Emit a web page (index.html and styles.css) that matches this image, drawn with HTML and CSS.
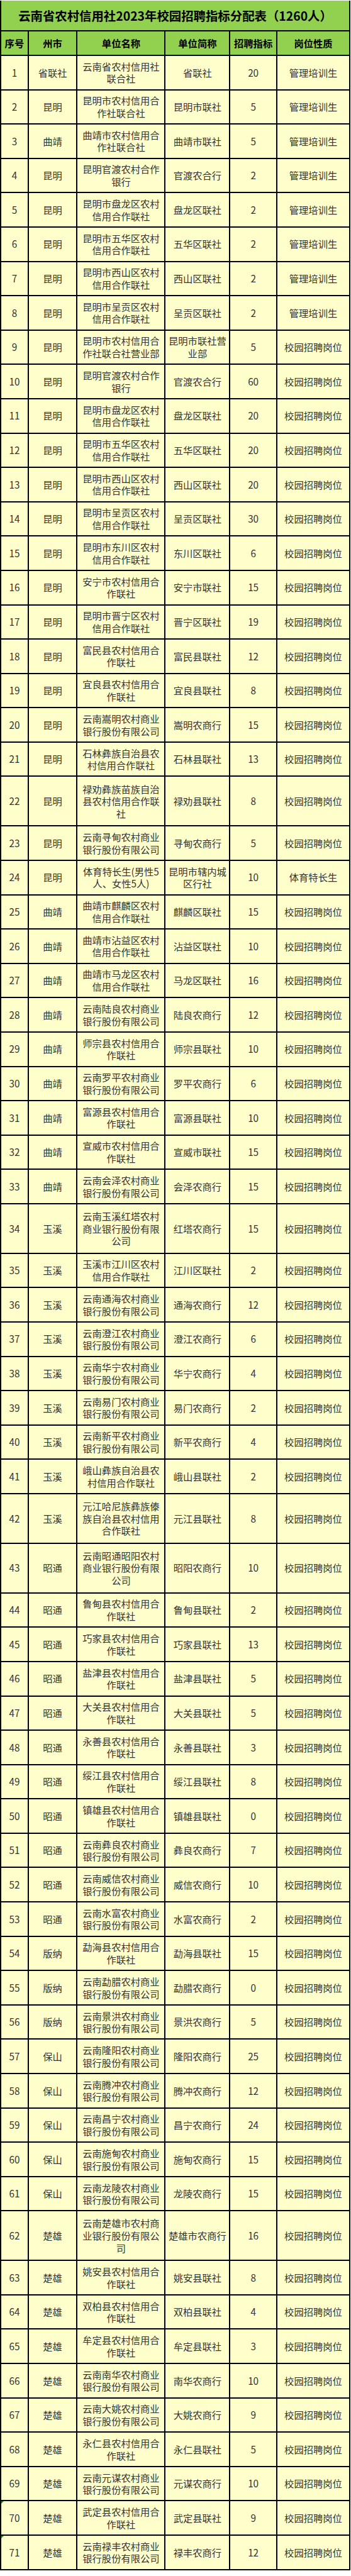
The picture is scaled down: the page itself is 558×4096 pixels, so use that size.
FILE: index.html
```html
<!DOCTYPE html>
<html lang="zh-CN">
<head>
<meta charset="utf-8">
<title>云南省农村信用社2023年校园招聘指标分配表</title>
<link rel="stylesheet" href="styles.css">
</head>
<body>
<table class="sheet">
<colgroup>
<col class="c-no"><col class="c-city"><col class="c-name"><col class="c-abbr"><col class="c-num"><col class="c-kind">
</colgroup>
<tbody>
<tr class="title"><td colspan="6">云南省农村信用社2023年校园招聘指标分配表（1260人）</td></tr>
<tr class="head"><th>序号</th><th>州市</th><th>单位名称</th><th>单位简称</th><th>招聘指标</th><th>岗位性质</th></tr>
<tr class="r2"><td>1</td><td>省联社</td><td>云南省农村信用社联合社</td><td class="abbr">省联社</td><td>20</td><td>管理培训生</td></tr>
<tr class="r2"><td>2</td><td>昆明</td><td>昆明市农村信用合作社联合社</td><td class="abbr">昆明市联社</td><td>5</td><td>管理培训生</td></tr>
<tr class="r2"><td>3</td><td>曲靖</td><td>曲靖市农村信用合作社联合社</td><td class="abbr">曲靖市联社</td><td>5</td><td>管理培训生</td></tr>
<tr class="r2"><td>4</td><td>昆明</td><td>昆明官渡农村合作银行</td><td class="abbr">官渡农合行</td><td>2</td><td>管理培训生</td></tr>
<tr class="r2"><td>5</td><td>昆明</td><td>昆明市盘龙区农村信用合作联社</td><td class="abbr">盘龙区联社</td><td>2</td><td>管理培训生</td></tr>
<tr class="r2"><td>6</td><td>昆明</td><td>昆明市五华区农村信用合作联社</td><td class="abbr">五华区联社</td><td>2</td><td>管理培训生</td></tr>
<tr class="r2"><td>7</td><td>昆明</td><td>昆明市西山区农村信用合作联社</td><td class="abbr">西山区联社</td><td>2</td><td>管理培训生</td></tr>
<tr class="r2"><td>8</td><td>昆明</td><td>昆明市呈贡区农村信用合作联社</td><td class="abbr">呈贡区联社</td><td>2</td><td>管理培训生</td></tr>
<tr class="r2"><td>9</td><td>昆明</td><td>昆明市农村信用合作社联合社营业部</td><td class="abbr">昆明市联社营业部</td><td>5</td><td>校园招聘岗位</td></tr>
<tr class="r2"><td>10</td><td>昆明</td><td>昆明官渡农村合作银行</td><td class="abbr">官渡农合行</td><td>60</td><td>校园招聘岗位</td></tr>
<tr class="r2"><td>11</td><td>昆明</td><td>昆明市盘龙区农村信用合作联社</td><td class="abbr">盘龙区联社</td><td>20</td><td>校园招聘岗位</td></tr>
<tr class="r2"><td>12</td><td>昆明</td><td>昆明市五华区农村信用合作联社</td><td class="abbr">五华区联社</td><td>20</td><td>校园招聘岗位</td></tr>
<tr class="r2"><td>13</td><td>昆明</td><td>昆明市西山区农村信用合作联社</td><td class="abbr">西山区联社</td><td>20</td><td>校园招聘岗位</td></tr>
<tr class="r2"><td>14</td><td>昆明</td><td>昆明市呈贡区农村信用合作联社</td><td class="abbr">呈贡区联社</td><td>30</td><td>校园招聘岗位</td></tr>
<tr class="r2"><td>15</td><td>昆明</td><td>昆明市东川区农村信用合作联社</td><td class="abbr">东川区联社</td><td>6</td><td>校园招聘岗位</td></tr>
<tr class="r2"><td>16</td><td>昆明</td><td>安宁市农村信用合作联社</td><td class="abbr">安宁市联社</td><td>15</td><td>校园招聘岗位</td></tr>
<tr class="r2"><td>17</td><td>昆明</td><td>昆明市晋宁区农村信用合作联社</td><td class="abbr">晋宁区联社</td><td>19</td><td>校园招聘岗位</td></tr>
<tr class="r2"><td>18</td><td>昆明</td><td>富民县农村信用合作联社</td><td class="abbr">富民县联社</td><td>12</td><td>校园招聘岗位</td></tr>
<tr class="r2"><td>19</td><td>昆明</td><td>宜良县农村信用合作联社</td><td class="abbr">宜良县联社</td><td>8</td><td>校园招聘岗位</td></tr>
<tr class="r2"><td>20</td><td>昆明</td><td>云南嵩明农村商业银行股份有限公司</td><td class="abbr">嵩明农商行</td><td>15</td><td>校园招聘岗位</td></tr>
<tr class="r2"><td>21</td><td>昆明</td><td>石林彝族自治县农村信用合作联社</td><td class="abbr">石林县联社</td><td>13</td><td>校园招聘岗位</td></tr>
<tr class="r3"><td>22</td><td>昆明</td><td>禄劝彝族苗族自治县农村信用合作联社</td><td class="abbr">禄劝县联社</td><td>8</td><td>校园招聘岗位</td></tr>
<tr class="r2"><td>23</td><td>昆明</td><td>云南寻甸农村商业银行股份有限公司</td><td class="abbr">寻甸农商行</td><td>5</td><td>校园招聘岗位</td></tr>
<tr class="r2"><td>24</td><td>昆明</td><td>体育特长生(男性5人、女性5人)</td><td class="abbr">昆明市辖内城区行社</td><td>10</td><td>体育特长生</td></tr>
<tr class="r2"><td>25</td><td>曲靖</td><td>曲靖市麒麟区农村信用合作联社</td><td class="abbr">麒麟区联社</td><td>15</td><td>校园招聘岗位</td></tr>
<tr class="r2"><td>26</td><td>曲靖</td><td>曲靖市沾益区农村信用合作联社</td><td class="abbr">沾益区联社</td><td>10</td><td>校园招聘岗位</td></tr>
<tr class="r2"><td>27</td><td>曲靖</td><td>曲靖市马龙区农村信用合作联社</td><td class="abbr">马龙区联社</td><td>16</td><td>校园招聘岗位</td></tr>
<tr class="r2"><td>28</td><td>曲靖</td><td>云南陆良农村商业银行股份有限公司</td><td class="abbr">陆良农商行</td><td>12</td><td>校园招聘岗位</td></tr>
<tr class="r2"><td>29</td><td>曲靖</td><td>师宗县农村信用合作联社</td><td class="abbr">师宗县联社</td><td>10</td><td>校园招聘岗位</td></tr>
<tr class="r2"><td>30</td><td>曲靖</td><td>云南罗平农村商业银行股份有限公司</td><td class="abbr">罗平农商行</td><td>6</td><td>校园招聘岗位</td></tr>
<tr class="r2"><td>31</td><td>曲靖</td><td>富源县农村信用合作联社</td><td class="abbr">富源县联社</td><td>10</td><td>校园招聘岗位</td></tr>
<tr class="r2"><td>32</td><td>曲靖</td><td>宣威市农村信用合作联社</td><td class="abbr">宣威市联社</td><td>15</td><td>校园招聘岗位</td></tr>
<tr class="r2"><td>33</td><td>曲靖</td><td>云南会泽农村商业银行股份有限公司</td><td class="abbr">会泽农商行</td><td>15</td><td>校园招聘岗位</td></tr>
<tr class="r3"><td>34</td><td>玉溪</td><td>云南玉溪红塔农村商业银行股份有限公司</td><td class="abbr">红塔农商行</td><td>15</td><td>校园招聘岗位</td></tr>
<tr class="r2"><td>35</td><td>玉溪</td><td>玉溪市江川区农村信用合作联社</td><td class="abbr">江川区联社</td><td>2</td><td>校园招聘岗位</td></tr>
<tr class="r2"><td>36</td><td>玉溪</td><td>云南通海农村商业银行股份有限公司</td><td class="abbr">通海农商行</td><td>12</td><td>校园招聘岗位</td></tr>
<tr class="r2"><td>37</td><td>玉溪</td><td>云南澄江农村商业银行股份有限公司</td><td class="abbr">澄江农商行</td><td>6</td><td>校园招聘岗位</td></tr>
<tr class="r2"><td>38</td><td>玉溪</td><td>云南华宁农村商业银行股份有限公司</td><td class="abbr">华宁农商行</td><td>4</td><td>校园招聘岗位</td></tr>
<tr class="r2"><td>39</td><td>玉溪</td><td>云南易门农村商业银行股份有限公司</td><td class="abbr">易门农商行</td><td>2</td><td>校园招聘岗位</td></tr>
<tr class="r2"><td>40</td><td>玉溪</td><td>云南新平农村商业银行股份有限公司</td><td class="abbr">新平农商行</td><td>4</td><td>校园招聘岗位</td></tr>
<tr class="r2"><td>41</td><td>玉溪</td><td>峨山彝族自治县农村信用合作联社</td><td class="abbr">峨山县联社</td><td>2</td><td>校园招聘岗位</td></tr>
<tr class="r3"><td>42</td><td>玉溪</td><td>元江哈尼族彝族傣族自治县农村信用合作联社</td><td class="abbr">元江县联社</td><td>8</td><td>校园招聘岗位</td></tr>
<tr class="r3"><td>43</td><td>昭通</td><td>云南昭通昭阳农村商业银行股份有限公司</td><td class="abbr">昭阳农商行</td><td>10</td><td>校园招聘岗位</td></tr>
<tr class="r2"><td>44</td><td>昭通</td><td>鲁甸县农村信用合作联社</td><td class="abbr">鲁甸县联社</td><td>2</td><td>校园招聘岗位</td></tr>
<tr class="r2"><td>45</td><td>昭通</td><td>巧家县农村信用合作联社</td><td class="abbr">巧家县联社</td><td>13</td><td>校园招聘岗位</td></tr>
<tr class="r2"><td>46</td><td>昭通</td><td>盐津县农村信用合作联社</td><td class="abbr">盐津县联社</td><td>5</td><td>校园招聘岗位</td></tr>
<tr class="r2"><td>47</td><td>昭通</td><td>大关县农村信用合作联社</td><td class="abbr">大关县联社</td><td>5</td><td>校园招聘岗位</td></tr>
<tr class="r2"><td>48</td><td>昭通</td><td>永善县农村信用合作联社</td><td class="abbr">永善县联社</td><td>3</td><td>校园招聘岗位</td></tr>
<tr class="r2"><td>49</td><td>昭通</td><td>绥江县农村信用合作联社</td><td class="abbr">绥江县联社</td><td>8</td><td>校园招聘岗位</td></tr>
<tr class="r2"><td>50</td><td>昭通</td><td>镇雄县农村信用合作联社</td><td class="abbr">镇雄县联社</td><td>0</td><td>校园招聘岗位</td></tr>
<tr class="r2"><td>51</td><td>昭通</td><td>云南彝良农村商业银行股份有限公司</td><td class="abbr">彝良农商行</td><td>7</td><td>校园招聘岗位</td></tr>
<tr class="r2"><td>52</td><td>昭通</td><td>云南威信农村商业银行股份有限公司</td><td class="abbr">威信农商行</td><td>10</td><td>校园招聘岗位</td></tr>
<tr class="r2"><td>53</td><td>昭通</td><td>云南水富农村商业银行股份有限公司</td><td class="abbr">水富农商行</td><td>2</td><td>校园招聘岗位</td></tr>
<tr class="r2"><td>54</td><td>版纳</td><td>勐海县农村信用合作联社</td><td class="abbr">勐海县联社</td><td>15</td><td>校园招聘岗位</td></tr>
<tr class="r2"><td>55</td><td>版纳</td><td>云南勐腊农村商业银行股份有限公司</td><td class="abbr">勐腊农商行</td><td>0</td><td>校园招聘岗位</td></tr>
<tr class="r2"><td>56</td><td>版纳</td><td>云南景洪农村商业银行股份有限公司</td><td class="abbr">景洪农商行</td><td>5</td><td>校园招聘岗位</td></tr>
<tr class="r2"><td>57</td><td>保山</td><td>云南隆阳农村商业银行股份有限公司</td><td class="abbr">隆阳农商行</td><td>25</td><td>校园招聘岗位</td></tr>
<tr class="r2"><td>58</td><td>保山</td><td>云南腾冲农村商业银行股份有限公司</td><td class="abbr">腾冲农商行</td><td>12</td><td>校园招聘岗位</td></tr>
<tr class="r2"><td>59</td><td>保山</td><td>云南昌宁农村商业银行股份有限公司</td><td class="abbr">昌宁农商行</td><td>24</td><td>校园招聘岗位</td></tr>
<tr class="r2"><td>60</td><td>保山</td><td>云南施甸农村商业银行股份有限公司</td><td class="abbr">施甸农商行</td><td>15</td><td>校园招聘岗位</td></tr>
<tr class="r2"><td>61</td><td>保山</td><td>云南龙陵农村商业银行股份有限公司</td><td class="abbr">龙陵农商行</td><td>15</td><td>校园招聘岗位</td></tr>
<tr class="r3"><td>62</td><td>楚雄</td><td>云南楚雄市农村商业银行股份有限公司</td><td class="abbr">楚雄市农商行</td><td>16</td><td>校园招聘岗位</td></tr>
<tr class="r2"><td>63</td><td>楚雄</td><td>姚安县农村信用合作联社</td><td class="abbr">姚安县联社</td><td>8</td><td>校园招聘岗位</td></tr>
<tr class="r2"><td>64</td><td>楚雄</td><td>双柏县农村信用合作联社</td><td class="abbr">双柏县联社</td><td>4</td><td>校园招聘岗位</td></tr>
<tr class="r2"><td>65</td><td>楚雄</td><td>牟定县农村信用合作联社</td><td class="abbr">牟定县联社</td><td>3</td><td>校园招聘岗位</td></tr>
<tr class="r2"><td>66</td><td>楚雄</td><td>云南南华农村商业银行股份有限公司</td><td class="abbr">南华农商行</td><td>10</td><td>校园招聘岗位</td></tr>
<tr class="r2"><td>67</td><td>楚雄</td><td>云南大姚农村商业银行股份有限公司</td><td class="abbr">大姚农商行</td><td>9</td><td>校园招聘岗位</td></tr>
<tr class="r2"><td>68</td><td>楚雄</td><td>永仁县农村信用合作联社</td><td class="abbr">永仁县联社</td><td>5</td><td>校园招聘岗位</td></tr>
<tr class="r2"><td>69</td><td>楚雄</td><td>云南元谋农村商业银行股份有限公司</td><td class="abbr">元谋农商行</td><td>10</td><td>校园招聘岗位</td></tr>
<tr class="r2"><td class="flag">70</td><td>楚雄</td><td>武定县农村信用合作联社</td><td class="abbr">武定县联社</td><td>9</td><td>校园招聘岗位</td></tr>
<tr class="r2"><td class="flag">71</td><td>楚雄</td><td>云南禄丰农村商业银行股份有限公司</td><td class="abbr">禄丰农商行</td><td>12</td><td>校园招聘岗位</td></tr>
</tbody>
</table>
</body>
</html>
```

FILE: styles.css
```css
html, body {
  margin: 0;
  padding: 0;
  background: #ffffff;
}

body {
  font-family: "Noto Sans CJK SC", "Noto Sans", sans-serif;
  color: #333333;
}

.sheet {
  margin-top: 1px;
  width: 557px;
  table-layout: fixed;
  border-collapse: separate;
  border-spacing: 0;
  border-left: 2px solid #000;
}

.c-no { width: 43.8px; }
.c-city { width: 77.6px; }
.c-name { width: 140.1px; }
.c-abbr { width: 102.8px; }
.c-num { width: 74.7px; }
.c-kind { width: 116px; }

.sheet td,
.sheet th {
  border-right: 2px solid #000;
  border-bottom: 2px solid #000;
  padding: 0 4px;
  text-align: center;
  vertical-align: middle;
  font-size: 15.3px;
  line-height: 19.6px;
  background: #ffffcc;
  font-weight: 400;
}

.sheet td.abbr {
  padding: 0 2px;
}

.title td {
  background: #92d050;
  color: #000;
  font-weight: 700;
  font-size: 19.4px;
  line-height: 24px;
  white-space: nowrap;
  padding: 0;
}

.title { height: 49px; }

.head th {
  background: #92d050;
  color: #000;
  font-weight: 700;
}

.head { height: 39px; }

.r2 { height: 54.6px; }
.r3 { height: 78.9px; }

.sheet td.flag {
  position: relative;
}

.sheet td.flag::before {
  content: "";
  position: absolute;
  left: 0;
  top: 0;
  width: 0;
  height: 0;
  border-top: 4px solid #1e8c1e;
  border-right: 4px solid transparent;
}
```
